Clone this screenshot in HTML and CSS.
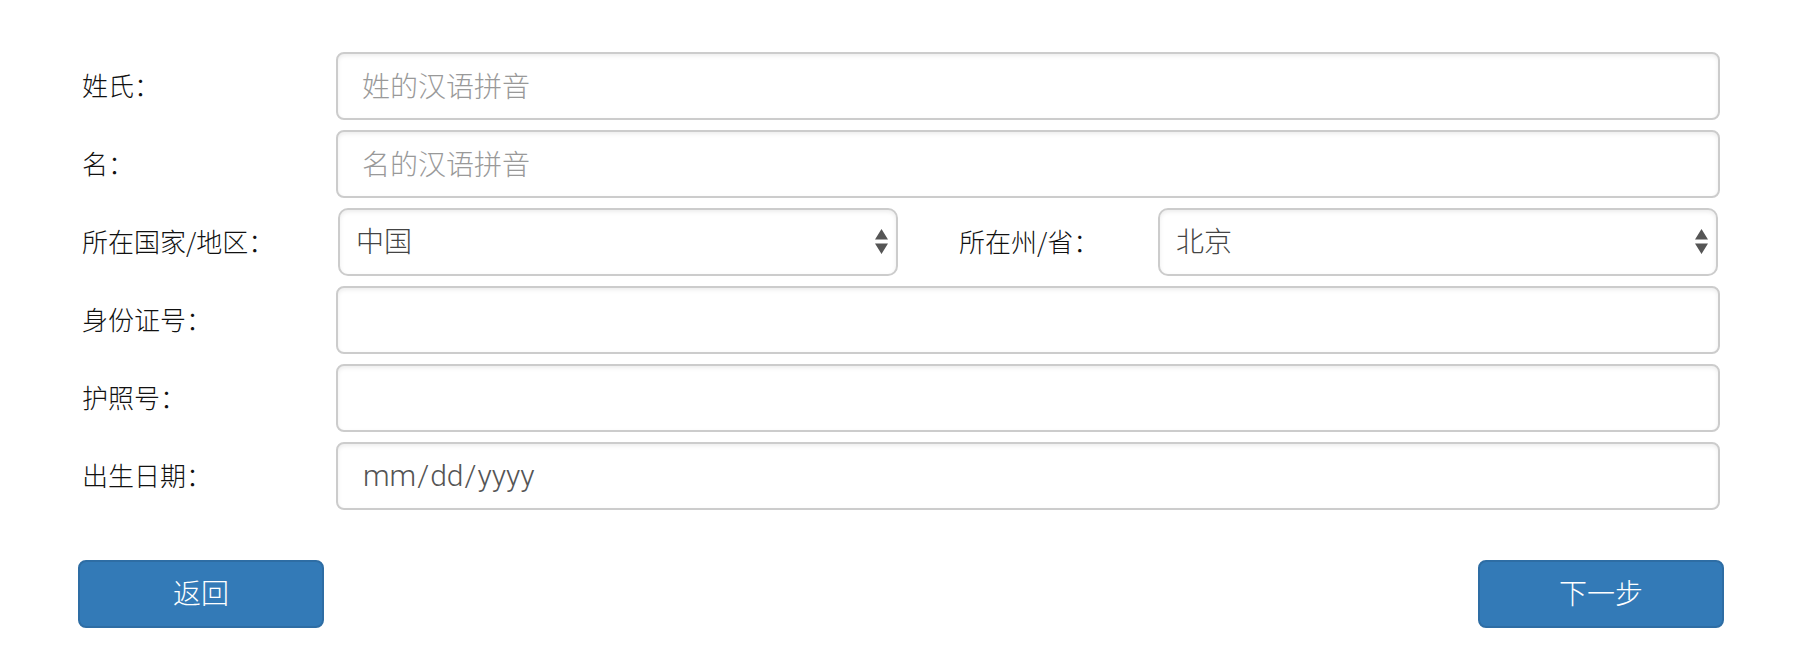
FILE: index.html
```html
<!DOCTYPE html>
<html lang="zh-CN">
<head>
<meta charset="utf-8">
<meta name="viewport" content="width=device-width, initial-scale=1">
<title>个人信息</title>
<link rel="stylesheet" href="styles.css">
</head>
<body>
<form class="profile-form">
  <div class="fields">
    <div class="row">
      <label class="label" for="surname">姓氏：</label>
      <input class="control" id="surname" type="text" placeholder="姓的汉语拼音">
    </div>
    <div class="row">
      <label class="label" for="given-name">名：</label>
      <input class="control" id="given-name" type="text" placeholder="名的汉语拼音">
    </div>
    <div class="row">
      <label class="label" for="country">所在国家/地区：</label>
      <div class="region">
        <div class="select">
          <select class="control control-select" id="country"><option>中国</option></select>
          <svg class="arrows" viewBox="0 0 13 25" aria-hidden="true"><path d="M6.500 0L13 10.500H0zM0 14.500H13L6.500 25z"/></svg>
        </div>
        <label class="label label-inner" for="province">所在州/省：</label>
        <div class="select">
          <select class="control control-select" id="province"><option>北京</option></select>
          <svg class="arrows" viewBox="0 0 13 25" aria-hidden="true"><path d="M6.500 0L13 10.500H0zM0 14.500H13L6.500 25z"/></svg>
        </div>
      </div>
    </div>
    <div class="row">
      <label class="label" for="id-number">身份证号：</label>
      <input class="control" id="id-number" type="text">
    </div>
    <div class="row">
      <label class="label" for="passport">护照号：</label>
      <input class="control" id="passport" type="text">
    </div>
    <div class="row">
      <label class="label" for="birthday">出生日期：</label>
      <input class="control control-date" id="birthday" type="date">
    </div>
  </div>
  <div class="actions">
    <button class="button" type="button">返回</button>
    <button class="button" type="submit">下一步</button>
  </div>
</form>
</body>
</html>
```
FILE: styles.css
```css
* {
  box-sizing: border-box;
}

body {
  margin: 0;
  background: #fff;
  color: #111;
  font-family: "Noto Sans CJK SC", sans-serif;
  font-weight: 300;
}

.profile-form {
  padding: 52px 88px 36px 78px;
}

.fields {
  display: flex;
  flex-direction: column;
  gap: 10px;
  padding: 0 4px;
}

.row {
  display: grid;
  grid-template-columns: 254px minmax(0, 1fr);
  align-items: center;
}

.label {
  padding-bottom: 2px;
  font-size: 26px;
  line-height: 36px;
  white-space: nowrap;
}

.control {
  width: 100%;
  height: 68px;
  margin: 0;
  padding: 0 24px 2px;
  border: 2px solid #ccc;
  border-radius: 8px;
  background: #fff;
  box-shadow: inset 0 2px 4px rgba(0, 0, 0, 0.075);
  color: #444;
  font-family: inherit;
  font-size: 28px;
  font-weight: 300;
  line-height: 40px;
}

.control::placeholder {
  color: #999;
  opacity: 1;
}

.region {
  display: grid;
  grid-template-columns: minmax(0, 1fr) 260px minmax(0, 1fr);
  align-items: center;
  padding: 0 2px;
}

.label-inner {
  padding-left: 61px;
}

.select {
  position: relative;
}

.control-select {
  display: block;
  padding: 0 36px 4px 16px;
  border-radius: 10px;
  appearance: none;
}

.arrows {
  position: absolute;
  top: 21px;
  right: 10px;
  width: 13px;
  height: 25px;
  fill: #555;
  pointer-events: none;
}

.control-date {
  padding-bottom: 0;
  color: #555;
  font-family: Roboto, sans-serif;
  font-size: 30px;
}

.control-date::-webkit-calendar-picker-indicator {
  display: none;
}

.actions {
  display: flex;
  justify-content: space-between;
  padding-top: 50px;
}

.button {
  width: 246px;
  height: 68px;
  padding: 0 0 4px;
  border: 2px solid #2e6da4;
  border-radius: 8px;
  background: #337ab7;
  color: #fff;
  font-family: inherit;
  font-size: 28px;
  font-weight: 300;
  line-height: 40px;
}
```
